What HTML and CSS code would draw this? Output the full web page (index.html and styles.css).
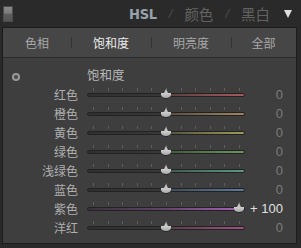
FILE: index.html
```html
<!DOCTYPE html>
<html lang="zh">
<head>
  <meta charset="UTF-8">
  <meta name="viewport" content="width=device-width, initial-scale=1.0">
  <title>HSL 饱和度</title>
  <link rel="stylesheet" href="styles.css">
</head>
<body>
  <div class="header">
    <div class="toggle"></div>
    <div class="modes">
      <span class="mode active">HSL</span>
      <span class="slash">/</span>
      <span class="mode">颜色</span>
      <span class="slash">/</span>
      <span class="mode">黑白</span>
      <span class="arrow"></span>
    </div>
  </div>

  <div class="panel">
    <div class="tabs">
      <div class="tab t1">色相</div>
      <div class="tab t2 selected">饱和度</div>
      <div class="tab t3">明亮度</div>
      <div class="tab t4">全部</div>
    </div>

    <div class="body">
      <div class="title-row">
        <div class="target"><span></span></div>
        <div class="title">饱和度</div>
      </div>

      <div class="row">
        <div class="label">红色</div>
        <div class="slider red"><div class="ticks"></div><div class="track"></div><div class="thumb" style="left: 50%"></div></div>
        <div class="value">0</div>
      </div>
      <div class="row">
        <div class="label">橙色</div>
        <div class="slider orange"><div class="ticks"></div><div class="track"></div><div class="thumb" style="left: 50%"></div></div>
        <div class="value">0</div>
      </div>
      <div class="row">
        <div class="label">黄色</div>
        <div class="slider yellow"><div class="ticks"></div><div class="track"></div><div class="thumb" style="left: 50%"></div></div>
        <div class="value">0</div>
      </div>
      <div class="row">
        <div class="label">绿色</div>
        <div class="slider green"><div class="ticks"></div><div class="track"></div><div class="thumb" style="left: 50%"></div></div>
        <div class="value">0</div>
      </div>
      <div class="row">
        <div class="label">浅绿色</div>
        <div class="slider aqua"><div class="ticks"></div><div class="track"></div><div class="thumb" style="left: 50%"></div></div>
        <div class="value">0</div>
      </div>
      <div class="row">
        <div class="label">蓝色</div>
        <div class="slider blue"><div class="ticks"></div><div class="track"></div><div class="thumb" style="left: 50%"></div></div>
        <div class="value">0</div>
      </div>
      <div class="row">
        <div class="label">紫色</div>
        <div class="slider purple full"><div class="ticks"></div><div class="track"></div><div class="thumb" style="left: 100%"></div></div>
        <div class="value bright">+ 100</div>
      </div>
      <div class="row">
        <div class="label">洋红</div>
        <div class="slider magenta"><div class="ticks"></div><div class="track"></div><div class="thumb" style="left: 50%"></div></div>
        <div class="value">0</div>
      </div>
    </div>
  </div>
</body>
</html>
```

FILE: styles.css
```css
body {
  margin: 0;
  background: #2a2a2a;
  font-family: "Noto Sans CJK SC", "Liberation Sans", sans-serif;
  font-size: 12px;
  color: #b4b4b4;
}

/* top bar */
.header {
  height: 27px;
  display: flex;
  align-items: center;
  justify-content: space-between;
  padding: 0 9px 0 3px;
}
.toggle {
  width: 8px;
  height: 14px;
  border: 1px solid #4c4c4c;
  background: linear-gradient(#8a8a8a 0%, #7a7a7a 45%, #5c5c5c 50%, #555 100%);
  margin-top: 1px;
}
.modes {
  display: flex;
  align-items: center;
  gap: 12px;
  color: #626262;
  font-size: 14.5px;
}
.mode.active {
  font-family: "DejaVu Sans", sans-serif;
  font-stretch: condensed;
  font-weight: bold;
  font-size: 14.5px;
  color: #98a2ab;
  letter-spacing: -0.3px;
}
.slash {
  font-family: "Liberation Sans", sans-serif;
  font-size: 13px;
  color: #4e4e4e;
  font-style: italic;
}
.arrow {
  width: 0;
  height: 0;
  border-left: 4px solid transparent;
  border-right: 4px solid transparent;
  border-top: 8px solid #dedede;
  margin-left: 2px;
}

/* panel */
.panel {
  margin: 0 4px 3px 2px;
  border: 1px solid #1c1c1c;
  background: #3e3e3e;
}
.tabs {
  display: flex;
  height: 29px;
  background: #464646;
  border-bottom: 1px solid #2a2a2a;
}
.tab {
  display: flex;
  align-items: center;
  justify-content: center;
  color: #a8a8a8;
  font-size: 12px;
  position: relative;
}
.tab.selected { color: #ececec; }
.t1 { width: 68px; }
.t2 { width: 80px; }
.t3 { width: 80px; }
.t4 { flex: 1; }
.tab + .tab::before {
  content: "";
  position: absolute;
  left: 0;
  top: 9px;
  height: 11px;
  border-left: 1px solid #333;
}

.body {
  padding: 6px 13px 6px 0;
}
.title-row {
  display: flex;
  align-items: center;
  height: 21px;
}
.target {
  width: 8px;
  height: 8px;
  border-radius: 50%;
  background: #9a9a9a;
  margin: 4px 0 0 9px;
  display: flex;
  align-items: center;
  justify-content: center;
}
.target span {
  width: 4px;
  height: 4px;
  border-radius: 50%;
  background: #4a4a4a;
}
.title {
  margin-left: 67px;
  font-size: 12.5px;
  color: #b8b8b8;
}

.row {
  display: flex;
  align-items: center;
  height: 19px;
}
.label {
  text-align: right;
  padding-right: 9px;
  box-sizing: border-box;
  width: 84px;
  color: #b0b0b0;
}
.slider {
  position: relative;
  width: 158px;
  height: 19px;
}
.track {
  position: absolute;
  left: 0;
  right: 0;
  top: 8px;
  height: 2px;
  border: 1px solid #222;
  border-radius: 2px;
  --c: #888;
  --m: #555;
  background: linear-gradient(to right, #303030 0%, #383838 50%, var(--m) 50%, var(--c) 100%);
}
.ticks {
  position: absolute;
  left: 6px;
  top: 3px;
  height: 3px;
  width: 147px;
  background: repeating-linear-gradient(to right, #5e5e5e 0, #5e5e5e 1px, transparent 1px, transparent 14.6px);
}
.thumb {
  position: absolute;
  top: 4px;
  width: 10px;
  height: 10px;
  margin-left: -5px;
}
.thumb::before {
  content: "";
  position: absolute;
  left: 2px;
  top: 0;
  width: 6px;
  height: 6px;
  background: #c4c4c4;
  clip-path: polygon(50% 0, 100% 100%, 0 100%);
}
.thumb::after {
  content: "";
  position: absolute;
  left: 0;
  top: 4px;
  width: 10px;
  height: 5px;
  border-radius: 0 0 5px 5px / 0 0 4px 4px;
  background: linear-gradient(#cfcfcf, #a8a8a8);
  border-bottom: 1px solid #2a2a2a;
}
.full .thumb { margin-left: -11px; }
.full .track {
  background: linear-gradient(to right, #3a323c 0%, #64446c 50%, var(--c) 100%);
}

.red .track { --m: #58403f; --c: #a8585c; }
.orange .track { --m: #584c3e; --c: #a08660; }
.yellow .track { --m: #52523c; --c: #9c9a58; }
.green .track { --m: #42583e; --c: #6a965c; }
.aqua .track { --m: #3e584f; --c: #5c9a86; }
.blue .track { --m: #3e4a58; --c: #5c7a9a; }
.purple .track { --c: #ac62bc; }
.magenta .track { --m: #583e4c; --c: #a0507c; }

.value {
  flex: 1;
  text-align: right;
  font-family: "Liberation Sans", sans-serif;
  font-size: 13px;
  color: #7c7c7c;
}
.value.bright { color: #e0e0e0; }
```
